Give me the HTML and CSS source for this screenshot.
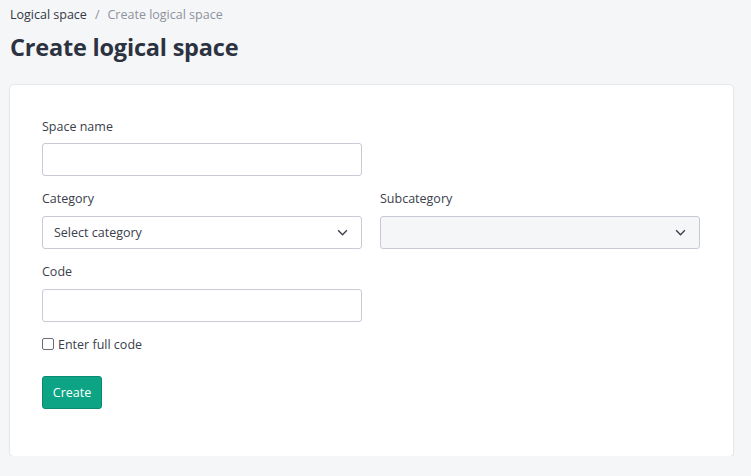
FILE: index.html
```html
<!DOCTYPE html>
<html>
<head>
<meta charset="utf-8">
<link rel="stylesheet" href="styles.css">
</head>
<body>
<div class="page">
  <nav class="crumbs"><span class="crumb-link">Logical space</span><span class="sep">/</span><span class="crumb-current">Create logical space</span></nav>
  <h1 class="title">Create logical space</h1>
  <div class="card">
    <div class="field field-first">
      <label class="label">Space name</label>
      <input class="input" type="text">
    </div>
    <div class="row">
      <div class="field">
        <label class="label">Category</label>
        <div class="select"><span>Select category</span><svg class="chev" viewBox="0 0 12 8" width="11" height="7"><path d="M1 1.5l5 5 5-5" fill="none" stroke="#3a3f4b" stroke-width="1.6"/></svg></div>
      </div>
      <div class="field">
        <label class="label">Subcategory</label>
        <div class="select disabled"><span></span><svg class="chev" viewBox="0 0 12 8" width="11" height="7"><path d="M1 1.5l5 5 5-5" fill="none" stroke="#3a3f4b" stroke-width="1.6"/></svg></div>
      </div>
    </div>
    <div class="field">
      <label class="label">Code</label>
      <input class="input" type="text">
    </div>
    <label class="check"><span class="box"></span>Enter full code</label>
    <button class="btn">Create</button>
  </div>
</div>
</body>
</html>
```
FILE: styles.css
```css
* { box-sizing: border-box; }
html, body { margin: 0; padding: 0; background: #f5f6f8; }
body { font-family: "Open Sans", "Noto Sans", sans-serif; color: #343a46; }
.page { padding: 6px 18px 0 10px; }
.crumbs { font-size: 12.5px; height: 18px; line-height: 18px; display: flex; align-items: center; }
.crumb-link { color: #333945; }
.sep { color: #8d929c; margin: 0 8px; }
.crumb-current { color: #8d929c; }
.title { margin: 8px 0 0; font-size: 23.5px; line-height: 30px; font-weight: 700; color: #2c3240; letter-spacing: -0.2px; }
.card { margin-top: 23px; background: #fff; border-radius: 4px; box-shadow: 0 0 0 1px #e6e7eb, 0 1px 2px rgba(0,0,0,0.12); padding: 33px 32px 47px; }
.field { display: flex; flex-direction: column; width: 320px; }
.label { font-size: 12.5px; line-height: 18px; color: #3a404c; margin-bottom: 8px; }
.field-first .label { margin-bottom: 7px; }
.input { height: 33px; border: 1px solid #c8c8d6; border-radius: 3px; background: #fff; margin-bottom: 14px; }
.row { display: flex; gap: 18px; }
.select { height: 33px; border: 1px solid #c8c8d6; border-radius: 3px; background: #fff; margin-bottom: 14px; display: flex; align-items: center; justify-content: space-between; padding: 0 13px 0 11px; font-size: 12.5px; color: #3a404c; }
.select.disabled { background: #f5f6f8; }
.check { display: flex; align-items: center; font-size: 12.5px; color: #3a404c; margin-top: -1px; height: 18px; }
.box { width: 12px; height: 12px; border: 1px solid #6b6f78; border-radius: 2px; margin-right: 4px; background: #fff; }
.btn { display: block; margin-top: 23px; width: 60px; height: 33px; background: #0da485; border: 1px solid #0a8a70; border-radius: 3px; color: #fff; font-family: inherit; font-size: 12.5px; font-weight: 500; padding: 0; }
```
